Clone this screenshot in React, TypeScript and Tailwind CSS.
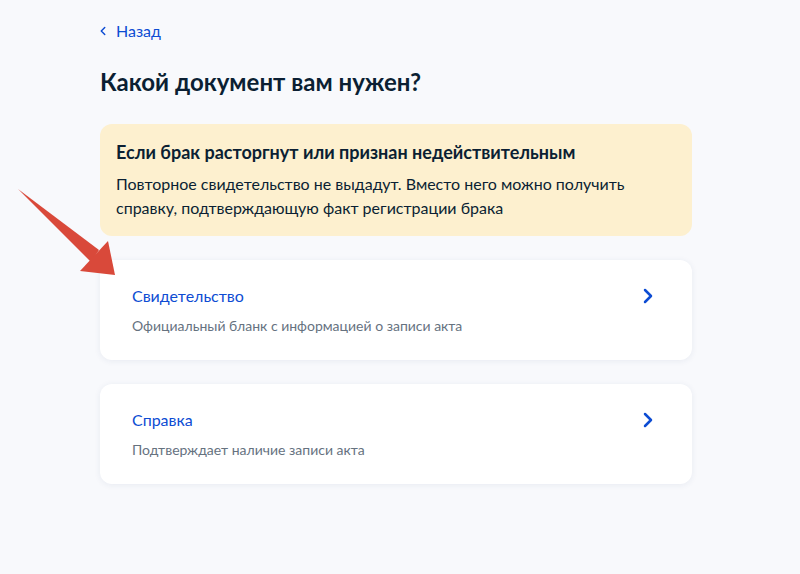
import { ChevronLeft, ChevronRight } from "lucide-react";

const options = [
  {
    title: "Свидетельство",
    text: "Официальный бланк с информацией о записи акта",
  },
  {
    title: "Справка",
    text: "Подтверждает наличие записи акта",
  },
];

function Arrow() {
  return (
    <svg
      className="pointer-events-none absolute left-0 top-0"
      width="130"
      height="290"
      viewBox="0 0 130 290"
    >
      <polygon points="18,189 99,250 91,262" fill="#d9493a" />
      <polygon points="108,241 115,275 80,271" fill="#d9493a" />
    </svg>
  );
}

export default function App() {
  return (
    <div className="relative min-h-[574px] w-full bg-[#f8f9fc] font-['Lato','Noto_Sans',sans-serif] text-[#0b1f33]">
      <Arrow />
      <div className="ml-[100px] w-[592px] pt-[19px]">
        <a href="#" className="flex items-center gap-[6px] text-[16px] leading-[24px] text-[#0d4cd3]">
          <ChevronLeft size={14} strokeWidth={2.5} className="-ml-[4px]" />
          <span>Назад</span>
        </a>

        <h1 className="mt-[23px] text-[24px] font-bold leading-[32px]">
          Какой документ вам нужен?
        </h1>

        <div className="mt-[26px] rounded-[12px] bg-[#fdf0cf] px-[16px] py-[16px]">
          <p className="text-[18px] font-bold leading-[24px]">
            Если брак расторгнут или признан недействительным
          </p>
          <p className="mt-[8px] text-[16px] leading-[24px]">
            Повторное свидетельство не выдадут. Вместо него можно получить
            справку, подтверждающую факт регистрации брака
          </p>
        </div>

        <div className="mt-[24px] flex flex-col gap-[24px]">
          {options.map((o) => (
            <a
              key={o.title}
              href="#"
              className="flex h-[100px] items-start justify-between rounded-[12px] bg-white px-[32px] pt-[24px] shadow-[0_1px_6px_rgba(40,60,120,0.08)]"
            >
              <div>
                <p className="text-[16px] leading-[24px] text-[#0d4cd3]">{o.title}</p>
                <p className="mt-[8px] text-[14px] leading-[20px] text-[#66727f]">{o.text}</p>
              </div>
              <ChevronRight size={24} strokeWidth={2.5} className="text-[#0d4cd3]" />
            </a>
          ))}
        </div>
      </div>
    </div>
  );
}
